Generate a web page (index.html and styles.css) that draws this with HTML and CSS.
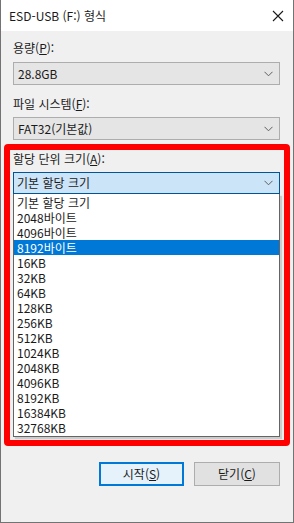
FILE: index.html
```html
<!DOCTYPE html>
<html lang="ko">
<head>
    <meta charset="UTF-8">
    <title>ESD-USB (F:) 형식</title>
    <link rel="stylesheet" href="styles.css">
</head>
<body>
    <div class="window">
        <!-- 제목 표시줄 -->
        <div class="titlebar">
            <span class="title">ESD-USB (F:) 형식</span>
            <svg class="close" width="12" height="12" viewBox="0 0 12 12">
                <path d="M1 1 L11 11 M11 1 L1 11" stroke="#1a1a1a" stroke-width="1.1" fill="none"/>
            </svg>
        </div>

        <div class="content">
            <div class="label">용량(<u>P</u>):</div>
            <div class="combo">
                <span>28.8GB</span>
                <svg class="chev" width="9" height="6" viewBox="0 0 9 6"><path d="M0.5 0.8 L4.5 4.8 L8.5 0.8" stroke="#606060" fill="none"/></svg>
            </div>

            <div class="label second">파일 시스템(<u>F</u>):</div>
            <div class="combo">
                <span>FAT32(기본값)</span>
                <svg class="chev" width="9" height="6" viewBox="0 0 9 6"><path d="M0.5 0.8 L4.5 4.8 L8.5 0.8" stroke="#606060" fill="none"/></svg>
            </div>

            <!-- 빨간 강조 상자 -->
            <div class="highlight">
                <div class="label">할당 단위 크기(<u>A</u>):</div>
                <div class="combo open">
                    <span>기본 할당 크기</span>
                    <svg class="chev" width="9" height="6" viewBox="0 0 9 6"><path d="M0.5 0.8 L4.5 4.8 L8.5 0.8" stroke="#606060" fill="none"/></svg>
                </div>
                <ul class="list">
                    <li>기본 할당 크기</li>
                    <li>2048바이트</li>
                    <li>4096바이트</li>
                    <li class="selected">8192바이트</li>
                    <li>16KB</li>
                    <li>32KB</li>
                    <li>64KB</li>
                    <li>128KB</li>
                    <li>256KB</li>
                    <li>512KB</li>
                    <li>1024KB</li>
                    <li>2048KB</li>
                    <li>4096KB</li>
                    <li>8192KB</li>
                    <li>16384KB</li>
                    <li>32768KB</li>
                </ul>
            </div>

            <div class="buttons">
                <button class="btn default">시작(<u>S</u>)</button>
                <button class="btn">닫기(<u>C</u>)</button>
            </div>
        </div>
    </div>
</body>
</html>
```

FILE: styles.css
```css
body {
    margin: 0;
    font-family: "Noto Sans CJK KR", "Noto Sans", sans-serif;
    font-size: 12px;
    color: #1a1a1a;
    background-color: #f0f0f0;
}
.window {
    width: 294px;
    height: 523px;
    box-sizing: border-box;
    border: 1px solid #737373;
    border-top: none;
    background-color: #f0f0f0;
    display: flex;
    flex-direction: column;
}
.titlebar {
    height: 31px;
    background-color: #fff;
    display: flex;
    align-items: center;
    justify-content: space-between;
    padding: 0 9px 0 8px;
    flex-shrink: 0;
}
.title {
    line-height: 14px;
}
.close {
    margin-top: 1px;
}
.content {
    padding: 10px 13px 0 12px;
}
.label {
    line-height: 14px;
    margin-bottom: 7px;
}
.label.second {
    margin-top: 12px;
    margin-bottom: 6px;
}
.combo {
    height: 23px;
    box-sizing: border-box;
    border: 1px solid #adadad;
    background-color: #e5e5e5;
    display: flex;
    align-items: center;
    justify-content: space-between;
    padding: 0 6px 0 4px;
    line-height: 14px;
}
.combo.open {
    height: 22px;
    background-color: #cce4f7;
    border-color: #005499;
    padding-left: 3px;
}
.highlight {
    margin: 4px -10px 0 -9px;
    border: 6px solid #ff0000;
    border-radius: 4px;
    padding: 2px 4px 3px 3px;
}
.highlight .label {
    margin-bottom: 6px;
}
.list {
    list-style: none;
    margin: 0;
    padding: 1px 0 1px 0;
    background-color: #fff;
    border: 1px solid #646464;
    border-top: none;
    box-shadow: 2px 2px 1px rgba(0, 0, 0, 0.15);
}
.list li {
    height: 15px;
    line-height: 15px;
    padding-left: 3px;
}
.list li.selected {
    background-color: #0078d7;
    color: #fff;
}
.buttons {
    display: flex;
    justify-content: flex-end;
    gap: 10px;
    margin-top: 16px;
}
.btn {
    width: 86px;
    height: 24px;
    box-sizing: border-box;
    border: 1px solid #adadad;
    background-color: #e1e1e1;
    font-family: inherit;
    font-size: 12px;
    color: #1a1a1a;
    padding: 0;
    line-height: 14px;
}
.btn.default {
    width: 85px;
    border: 2px solid #0078d7;
    background-color: #e5f1fb;
}
```
